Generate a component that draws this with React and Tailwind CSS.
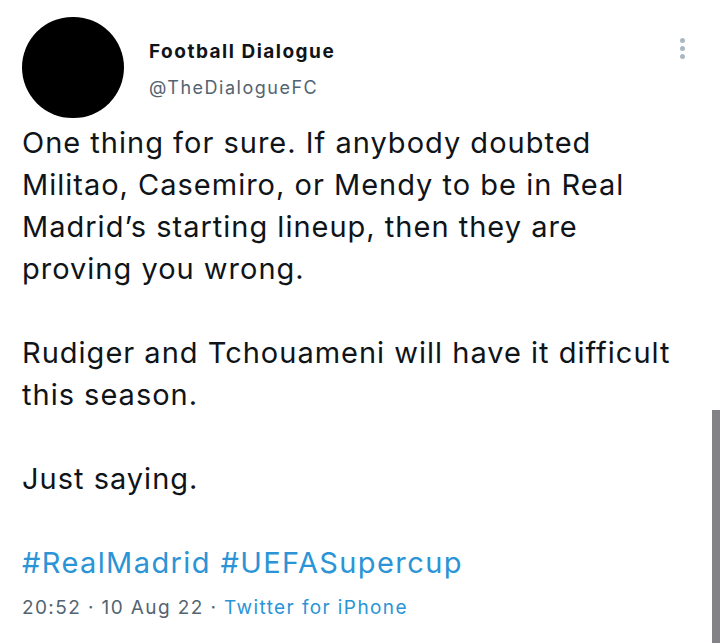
import React from 'react';

const lines = [
  ['One thing for sure. If anybody doubted', 'Militao, Casemiro, or Mendy to be in Real', 'Madrid’s starting lineup, then they are', 'proving you wrong.'],
  ['Rudiger and Tchouameni will have it difficult', 'this season.'],
  ['Just saying.'],
];

const App = () => {
  return (
    <div className="relative w-[720px] h-[643px] overflow-hidden bg-white font-['Inter',sans-serif]">
      {/* Cabecera */}
      <div className="flex items-start pl-[22px] pr-[35px] pt-[17px]">
        <div className="w-[102px] h-[101px] rounded-full bg-black shrink-0" />
        <div className="flex-1 pl-[25px] pt-[22px]">
          <div className="text-[19px] leading-[26px] font-bold tracking-[1.5px] text-[#0f1419]">Football Dialogue</div>
          <div className="text-[18px] leading-[26px] mt-[10px] tracking-[1.5px] text-[#536471]">@TheDialogueFC</div>
        </div>
        <div className="flex flex-col gap-[3px] pt-[21px]">
          <span className="w-[5px] h-[5px] rounded-full bg-[#aab8c2]" />
          <span className="w-[5px] h-[5px] rounded-full bg-[#aab8c2]" />
          <span className="w-[5px] h-[5px] rounded-full bg-[#aab8c2]" />
        </div>
      </div>

      {/* Texto */}
      <div className="pl-[22px] pt-[4px] text-[29px] leading-[42px] tracking-[1px] text-[#0f1419]">
        {lines.map((para, i) => (
          <div key={i} className={i > 0 ? 'mt-[42px]' : ''}>
            {para.map((l, j) => (
              <div key={j} className="whitespace-nowrap">{l}</div>
            ))}
          </div>
        ))}
        <div className="mt-[42px] tracking-[1.4px] text-[#2a94d6]">#RealMadrid #UEFASupercup</div>
      </div>

      <div className="pl-[22px] mt-[10px] text-[19px] leading-[28px] tracking-[1.4px] text-[#536471]">
        20:52 · 10 Aug 22 · <span className="text-[#2a94d6]">Twitter for iPhone</span>
      </div>

      {/* Barra de scroll */}
      <div className="absolute right-0 top-[410px] w-[8px] h-[233px] bg-[#838387]" />
    </div>
  );
};

export default App;
